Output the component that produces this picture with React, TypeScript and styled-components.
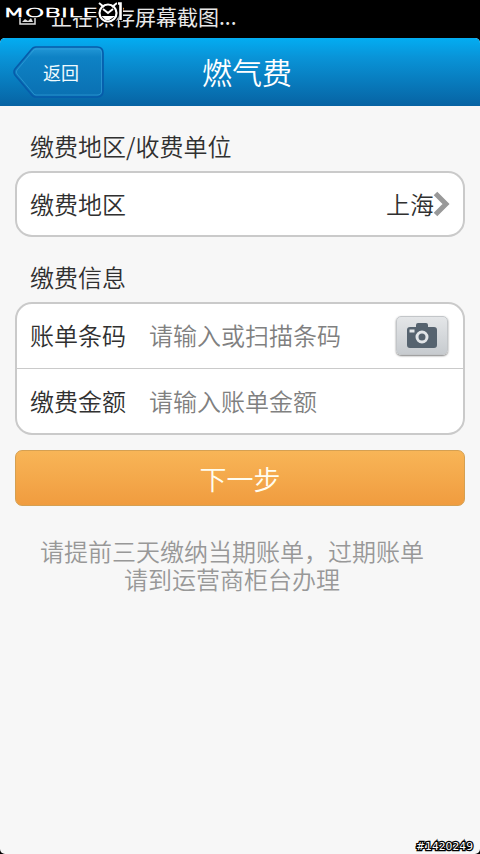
import React from 'react';
import styled, { createGlobalStyle } from 'styled-components';

const GlobalStyle = createGlobalStyle`
  * { box-sizing: border-box; }
  body {
    margin: 0;
    background: #000;
    font-family: "Noto Sans CJK SC", sans-serif;
    font-weight: 350;
  }
  button, input { font: inherit; padding: 0; }
`;

const Screen = styled.div`
  position: relative;
  width: 480px;
  height: 854px;
  overflow: hidden;
  display: flex;
  flex-direction: column;
  background: #000;
`;

const StatusBar = styled.div`
  position: relative;
  flex: none;
  height: 38px;
  display: flex;
  align-items: flex-start;
  padding: 1px 0 0 51px;
  color: #e8e8e8;
  font-size: 21px;
  line-height: 30px;
  font-weight: 400;
  white-space: nowrap;
`;

const SiteLogo = styled.svg`
  position: absolute;
  left: 0;
  top: 0;
`;

const AppWindow = styled.div`
  flex: 1;
  display: flex;
  flex-direction: column;
  border-radius: 5px;
  overflow: hidden;
  background: #f7f7f7;
`;

const Header = styled.header`
  flex: none;
  height: 68px;
  display: grid;
  grid-template-columns: 106px 1fr 92px;
  align-items: center;
  background: linear-gradient(#03adf2 0%, #0994d8 28%, #0763a3 100%);
`;

const BackButton = styled.button`
  position: relative;
  width: 92px;
  height: 52px;
  margin-left: 13px;
  border: 0;
  background: none;
  color: #f0fbff;
  font-size: 18px;
  line-height: 50px;
  padding-left: 4px;
  font-weight: 400;
`;

const BackShape = styled.svg`
  position: absolute;
  left: 0;
  top: 0;
`;

const BackLabel = styled.span`
  position: relative;
`;

const Title = styled.h1`
  margin: 0;
  padding-bottom: 2px;
  color: #fff;
  text-align: center;
  font-size: 30px;
  line-height: 44px;
  font-weight: 350;
`;

const Content = styled.main`
  display: flex;
  flex-direction: column;
  padding: 22px 15px 0;
`;

const SectionTitle = styled.h2`
  margin: 0 0 7px 15px;
  color: #303030;
  font-size: 24px;
  line-height: 36px;
  font-weight: 350;
`;

const Card = styled.section<{ $gap: number }>`
  margin-bottom: ${(p) => p.$gap}px;
  border: 2px solid #cacaca;
  border-radius: 17px;
  background: #fff;
  overflow: hidden;
`;

const Row = styled.div<{ $height: number; $divided?: boolean }>`
  display: flex;
  align-items: center;
  height: ${(p) => p.$height}px;
  padding: 0 13px ${(p) => (p.$divided ? 2 : 0)}px;
  border-bottom: ${(p) => (p.$divided ? '1px solid #cacaca' : '0')};
  color: #303030;
  font-size: 24px;
  line-height: 36px;
`;

const FieldLabel = styled.label`
  width: 119px;
`;

const Field = styled.input`
  flex: 1;
  min-width: 0;
  height: 38px;
  margin-bottom: 1px;
  border: 0;
  outline: 0;
  background: transparent;
  color: #303030;
  &::placeholder { color: #808080; opacity: 1; }
`;

const RegionValue = styled.span`
  margin: 0 -1px 0 auto;
`;

const ScanButton = styled.button`
  flex: none;
  width: 52px;
  height: 39px;
  margin: 1px 2px 0 0;
  border: 1px solid #c3c6c9;
  border-radius: 5px;
  display: flex;
  align-items: center;
  justify-content: center;
  background: linear-gradient(#e4e6e8, #c7cbcf);
  box-shadow: 0 1px 2px rgba(0, 0, 0, 0.5);
`;

const NextButton = styled.button`
  height: 56px;
  border: 1px solid #d5a052;
  border-radius: 7px;
  background: linear-gradient(#f8b557, #f09c3f);
  color: #fffdf0;
  font-size: 27px;
  line-height: 52px;
  padding-top: 2px;
`;

const Hint = styled.p`
  margin: 31px 0 0;
  padding: 0 27px 0 11px;
  color: #989898;
  text-align: center;
  font-size: 24px;
  line-height: 28px;
`;

const Watermark = styled.svg`
  position: absolute;
  right: 0;
  bottom: 0;
`;

export default function App() {
  return (
    <Screen>
      <GlobalStyle />
      <StatusBar>
        正在保存屏幕截图...
        <SiteLogo width="130" height="30" viewBox="0 0 130 30">
          <path d="M20 15h15v9H20z" fill="none" stroke="#ddd" strokeWidth="1.5" />
          <path d="M22 22l3-3 3 2 3-3 2 4z" fill="#ddd" />
          <path d="M2 5h97v13H2z" fill="#000" />
          <text
            x="3" y="17.300" textLength="95" lengthAdjust="spacingAndGlyphs"
            fontFamily="DejaVu Sans" fontSize="13" fontWeight="200"
            fill="#fff" stroke="#fff" strokeWidth=".7"
          >MOBILE</text>
          <circle cx="108" cy="13" r="11" fill="#000" />
          <circle cx="108" cy="13" r="8.500" fill="#000" stroke="#fff" strokeWidth="2.200" />
          <path d="M99 3l5 4M117 3l-5 4M103 9l5 4 5-4M104 17h8l-3 2h-3z" fill="none" stroke="#fff" strokeWidth="2" />
          <path d="M117 2h6v19h-4" fill="#000" />
          <path d="M118 3.500h2.500V20" fill="none" stroke="#fff" strokeWidth="2.600" />
        </SiteLogo>
      </StatusBar>
      <AppWindow>
        <Header>
          <BackButton>
            <BackShape width="92" height="52" viewBox="0 0 92 52">
              <defs>
                <linearGradient id="back" x1="0" y1="0" x2="0" y2="1">
                  <stop offset="0" stopColor="#2399d8" />
                  <stop offset=".2" stopColor="#0e82c5" />
                  <stop offset="1" stopColor="#0a70b2" />
                </linearGradient>
              </defs>
              <path
                d="M23 1H84Q90 1 90 7V45Q90 51 84 51H23Q20 51 18 48L2 29Q0 26 2 23L18 4Q20 1 23 1Z"
                fill="url(#back)" stroke="#075baa" strokeWidth="1.6"
              />
              <path
                d="M24 3H84Q88.500 3 88.500 7V45Q88.500 49 84 49H23Q21 49 20 47L4 28Q2.500 26 4 24L20 5Q21 3 24 3Z"
                fill="none" stroke="#36a2db" strokeOpacity=".65"
              />
            </BackShape>
            <BackLabel>返回</BackLabel>
          </BackButton>
          <Title>燃气费</Title>
        </Header>
        <Content>
          <SectionTitle>缴费地区/收费单位</SectionTitle>
          <Card $gap={22}>
            <Row $height={62}>
              <span>缴费地区</span>
              <RegionValue>上海</RegionValue>
              <svg width="17" height="26" viewBox="0 0 17 26">
                <path d="M2.500 2.500L13 13L2.500 23.500" fill="none" stroke="#999" strokeWidth="5" />
              </svg>
            </Row>
          </Card>
          <SectionTitle>缴费信息</SectionTitle>
          <Card $gap={15}>
            <Row $height={65} $divided>
              <FieldLabel htmlFor="barcode">账单条码</FieldLabel>
              <Field id="barcode" placeholder="请输入或扫描条码" />
              <ScanButton aria-label="扫描">
                <svg width="32" height="28" viewBox="0 0 32 28">
                  <path
                    fill="#56636f"
                    d="M4 5H10V3Q10 1 12 1H20Q22 1 22 3V5H28Q31 5 31 8V23Q31 26 28 26H4Q1 26 1 23V8Q1 5 4 5Z"
                  />
                  <path d="M3.500 7.500h5v3h-5z" fill="#e2e5e8" />
                  <circle cx="16" cy="15" r="5" fill="none" stroke="#e2e5e8" strokeWidth="3" />
                </svg>
              </ScanButton>
            </Row>
            <Row $height={64}>
              <FieldLabel htmlFor="amount">缴费金额</FieldLabel>
              <Field id="amount" placeholder="请输入账单金额" />
            </Row>
          </Card>
          <NextButton>下一步</NextButton>
          <Hint>请提前三天缴纳当期账单，过期账单<br />请到运营商柜台办理</Hint>
        </Content>
      </AppWindow>
      <Watermark width="70" height="18" viewBox="0 0 70 18">
        <text
          x="6" y="14" textLength="57" lengthAdjust="spacingAndGlyphs"
          fontFamily="DejaVu Sans" fontSize="10" fontWeight="400"
          fill="#fff" stroke="#000" strokeWidth="2.400" paintOrder="stroke"
        >#1420249</text>
      </Watermark>
    </Screen>
  );
}
